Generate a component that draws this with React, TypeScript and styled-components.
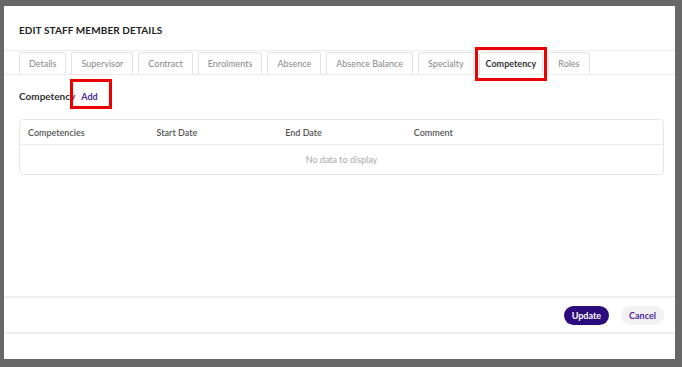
import styled, { createGlobalStyle } from 'styled-components';

const GlobalStyle = createGlobalStyle`
  html, body {
    margin: 0;
    padding: 0;
    background: #666666;
    font-family: Lato, "Open Sans", sans-serif;
  }
`;

const Backdrop = styled.div`
  width: 682px;
  height: 367px;
  padding: 6px 7px 0 4px;
  box-sizing: border-box;
  background: #676767;
`;

const Modal = styled.div`
  height: 353px;
  background: #ffffff;
  display: flex;
  flex-direction: column;
`;

const Header = styled.div`
  height: 45px;
  display: flex;
  align-items: center;
  padding: 4px 15px 0;
  border-bottom: 1px solid #ececec;
  box-sizing: border-box;
`;

const Title = styled.h1`
  margin: 0;
  font-size: 10px;
  font-weight: 700;
  color: #222;
  letter-spacing: 0.1px;
`;

const TabBar = styled.div`
  display: flex;
  gap: 5px;
  padding: 1px 15px 0;
  border-bottom: 1px solid #ececec;
`;

const Tab = styled.div<{ $active?: boolean }>`
  position: relative;
  height: 21px;
  padding: 0 ${(p) => (p.$active ? 6 : 9)}px;
  display: flex;
  align-items: center;
  border: 1px solid #e2e2e2;
  border-bottom: none;
  border-radius: 3px 3px 0 0;
  font-size: 9px;
  color: ${(p) => (p.$active ? '#333' : '#888')};
  font-weight: ${(p) => (p.$active ? 700 : 400)};
`;

const Highlight = styled.span<{ $t: number; $r: number; $b: number; $l: number }>`
  position: absolute;
  top: ${(p) => p.$t}px;
  right: ${(p) => p.$r}px;
  bottom: ${(p) => p.$b}px;
  left: ${(p) => p.$l}px;
  border: 3px solid #ee0000;
  pointer-events: none;
`;

const Body = styled.div`
  flex: 1;
  padding: 0 11px 0 15px;
`;

const SectionHead = styled.div`
  display: flex;
  align-items: center;
  gap: 6px;
  height: 44px;
  padding-bottom: 2px;
  box-sizing: border-box;
`;

const SectionTitle = styled.span`
  font-size: 10px;
  font-weight: 700;
  color: #333;
`;

const AddLink = styled.span`
  position: relative;
  font-size: 9px;
  font-weight: 700;
  color: #4a2a9a;
`;

const Table = styled.div`
  border: 1px solid #e6e6e6;
  border-radius: 4px;
`;

const Row = styled.div<{ $h: number }>`
  display: grid;
  grid-template-columns: repeat(5, 1fr);
  height: ${(p) => p.$h}px;
  align-items: center;
`;

const HeadCell = styled.div`
  padding-left: 8px;
  font-size: 9px;
  font-weight: 600;
  color: #555;
`;

const EmptyRow = styled.div`
  height: 29px;
  border-top: 1px solid #ececec;
  display: flex;
  align-items: center;
  justify-content: center;
  font-size: 9px;
  color: #aaa;
`;

const Footer = styled.div`
  height: 34px;
  margin-bottom: 25px;
  border-top: 2px solid #efefef;
  border-bottom: 2px solid #efefef;
  display: flex;
  align-items: center;
  justify-content: flex-end;
  gap: 12px;
  padding-right: 11px;
`;

const Button = styled.button<{ $primary?: boolean }>`
  height: 19px;
  padding: 0 8px;
  border: none;
  border-radius: 10px;
  font-family: inherit;
  font-size: 9px;
  font-weight: 700;
  background: ${(p) => (p.$primary ? '#2c0b7c' : '#f2f2f4')};
  color: ${(p) => (p.$primary ? '#ffffff' : '#4a2a9a')};
`;

const tabs = [
  'Details',
  'Supervisor',
  'Contract',
  'Enrolments',
  'Absence',
  'Absence Balance',
  'Specialty',
  'Competency',
  'Roles',
];

const columns = ['Competencies', 'Start Date', 'End Date', 'Comment', ''];

export default function App() {
  return (
    <>
      <GlobalStyle />
      <Backdrop>
        <Modal>
          <Header>
            <Title>EDIT STAFF MEMBER DETAILS</Title>
          </Header>
          <TabBar>
            {tabs.map((t) => (
              <Tab key={t} $active={t === 'Competency'}>
                {t}
                {t === 'Competency' && <Highlight $t={-6} $r={-5} $b={-7} $l={-5} />}
              </Tab>
            ))}
          </TabBar>
          <Body>
            <SectionHead>
              <SectionTitle>Competency</SectionTitle>
              <AddLink>
                Add
                <Highlight $t={-12} $r={-14} $b={-7} $l={-11} />
              </AddLink>
            </SectionHead>
            <Table>
              <Row $h={24}>
                {columns.map((c, i) => (
                  <HeadCell key={i}>{c}</HeadCell>
                ))}
              </Row>
              <EmptyRow>No data to display</EmptyRow>
            </Table>
          </Body>
          <Footer>
            <Button $primary>Update</Button>
            <Button>Cancel</Button>
          </Footer>
        </Modal>
      </Backdrop>
    </>
  );
}
